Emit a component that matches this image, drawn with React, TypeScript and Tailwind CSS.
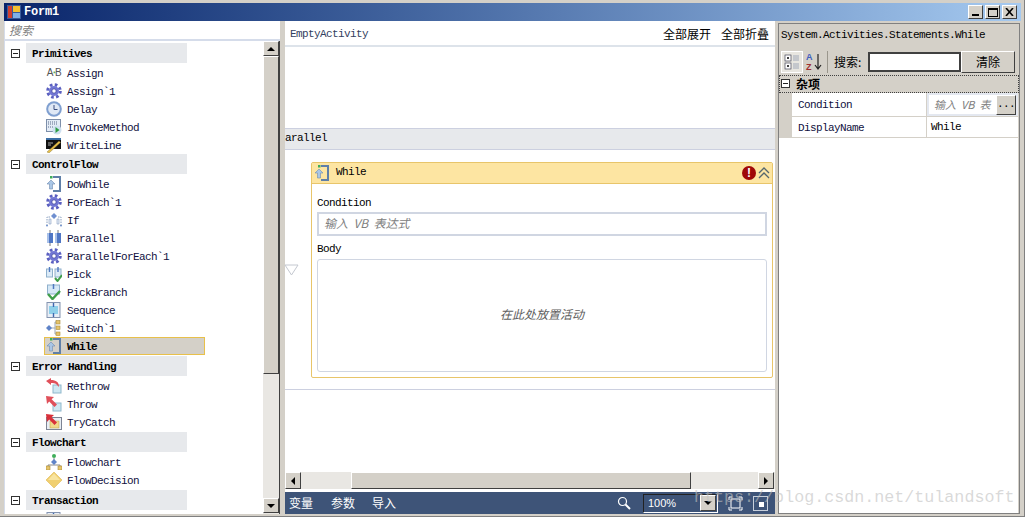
import React from "react";

const Svg = ({ children, s = 16 }: { children: React.ReactNode; s?: number }) => (
  <svg width={s} height={s} viewBox="0 0 16 16" className="shrink-0">{children}</svg>
);

const Gear = () => (
  <Svg>
    <circle cx="8" cy="8" r="6.3" fill="none" stroke="#5a5fc0" strokeWidth="3" strokeDasharray="2.6 2.35" />
    <circle cx="8" cy="8" r="5" fill="#7277d4" />
    <circle cx="8" cy="8" r="2.2" fill="#fff" stroke="#3f44a0" strokeWidth="0.8" />
  </Svg>
);
const AB = () => (
  <span className="w-[16px] h-[16px] flex items-center justify-center text-[10px] leading-none text-[#555] font-['Liberation_Sans',sans-serif]">
    A<span className="text-[#3f9e4a] text-[7px]">*</span>B
  </span>
);
const Clock = () => (
  <Svg>
    <circle cx="8" cy="8" r="7.8" fill="#7f9fd0" />
    <circle cx="8" cy="8" r="5.8" fill="#dfe8f5" />
    <path d="M8 4v4.5h3.5" stroke="#3a4f80" strokeWidth="1" fill="none" />
  </Svg>
);
const Invoke = () => (
  <Svg>
    <rect x="0.5" y="0.5" width="14" height="12" fill="#e4ecf6" stroke="#7d8faa" />
    <path d="M2 3h10M2 5h10M2 8h6" stroke="#5a6a8a" strokeWidth="1" strokeDasharray="1 1" />
    <circle cx="11" cy="11" r="4.5" fill="#cfe0f0" />
    <path d="M9.5 8l4 3-4 3z" fill="#2f9e44" />
  </Svg>
);
const WriteL = () => (
  <Svg>
    <rect x="0" y="1" width="15" height="11" fill="#111" />
    <rect x="0" y="1" width="15" height="2" fill="#3a6ea5" />
    <path d="M2 6h5M2 8h3" stroke="#aaa" strokeWidth="1" />
    <path d="M1 15L13 4l1.5 1.5L3 16z" fill="#e8c04a" stroke="#7a6a30" strokeWidth="0.4" />
  </Svg>
);
const Loop = () => (
  <Svg>
    <path d="M7 1h7v14H7" fill="none" stroke="#5f7fa8" strokeWidth="2" />
    <path d="M5 4l4 4H6.5v5h-3V8H1z" fill="#a9c6e6" stroke="#6f8cb0" strokeWidth="0.6" />
    <rect x="4" y="0" width="2.5" height="2.5" fill="#3fae5a" />
  </Svg>
);
const If = () => (
  <Svg>
    <path d="M8 1l3 3-3 3-3-3z" fill="#6f8fd0" />
    <path d="M4 5H1v8M12 5h3v8" fill="none" stroke="#8aa0c0" strokeWidth="1" strokeDasharray="1.5 1" />
    <path d="M3 7h2v5H3zM11 7h2v5h-2z" fill="#e6eef8" stroke="#8aa0c0" strokeWidth="0.6" />
    <path d="M1 15l-1-2h2zM15 15l-1-2h2z" fill="#4f78c0" />
  </Svg>
);
const Par = () => (
  <Svg>
    <path d="M4 0v16M12 0v16" stroke="#777" strokeWidth="1" />
    <rect x="1" y="3" width="6" height="10" fill="#4f76c4" />
    <rect x="9" y="3" width="6" height="10" fill="#4f76c4" />
    <rect x="1" y="3" width="2" height="10" fill="#a8c0e8" />
    <rect x="9" y="3" width="2" height="10" fill="#a8c0e8" />
  </Svg>
);
const Pick = () => (
  <Svg>
    <rect x="0.5" y="3" width="6" height="8" fill="#dcebf7" stroke="#8fb0cc" />
    <rect x="9" y="3" width="6" height="8" fill="#dcebf7" stroke="#8fb0cc" />
    <path d="M3.5 1v5M12 1v5" stroke="#4f78c0" strokeWidth="1.4" />
    <path d="M9 12l2.5 3L16 9" stroke="#3f9e4a" strokeWidth="2" fill="none" />
  </Svg>
);
const Branch = () => (
  <Svg>
    <rect x="1.5" y="1" width="12" height="9" fill="#d6e8f6" stroke="#8fb0cc" />
    <path d="M7.5 0v5" stroke="#4f78c0" strokeWidth="1.5" />
    <path d="M2 10l4.5 5L14 7" stroke="#3f9e4a" strokeWidth="2.4" fill="none" />
  </Svg>
);
const Seq = () => (
  <Svg>
    <rect x="1" y="0.5" width="13" height="15" fill="#e8eef6" stroke="#8494b0" />
    <rect x="3" y="4" width="9" height="8" fill="#8fd0ea" />
    <path d="M7.5 1v4M7.5 11v4" stroke="#3f68b0" strokeWidth="1.4" />
  </Svg>
);
const Switch = () => (
  <Svg>
    <path d="M3 8h6M10 2h-1v12h1" stroke="#9aa8bc" fill="none" />
    <path d="M3 5l3 3-3 3-3-3z" fill="#5f83c8" />
    <rect x="10" y="0.5" width="4" height="3.5" fill="#e6c46a" stroke="#a98a38" strokeWidth="0.6" />
    <rect x="10" y="6" width="4" height="3.5" fill="#e6c46a" stroke="#a98a38" strokeWidth="0.6" />
    <rect x="10" y="12" width="4" height="3.5" fill="#e6c46a" stroke="#a98a38" strokeWidth="0.6" />
  </Svg>
);
const Rethrow = () => (
  <Svg>
    <rect x="7" y="7" width="8" height="8" fill="#cfe8f2" stroke="#8fb8cc" />
    <path d="M0 3l5-3v2c5 0 8 2 8 7l-3-3c-1-1-3-1-5-1v2z" fill="#e0505a" />
  </Svg>
);
const Thrw = () => (
  <Svg>
    <rect x="7" y="7" width="8" height="8" fill="#cfe8f2" stroke="#8fb8cc" />
    <path d="M0 0l8 1-2.4 2.2L11 8.5 8.5 11 3.2 5.6 1 8z" fill="#e0505a" />
  </Svg>
);
const TryC = () => (
  <Svg>
    <rect x="0.5" y="3.5" width="15" height="12" fill="#e8eef4" stroke="#7d8494" />
    <rect x="4" y="7" width="9" height="7" fill="#f0d88a" stroke="#c0a040" strokeWidth="0.5" />
    <path d="M0 0l8 1-2.4 2.2L11 8.5 8.5 11 3.2 5.6 1 8z" fill="#d8303a" />
  </Svg>
);
const Flow = () => (
  <Svg>
    <circle cx="8" cy="2" r="2" fill="#3fae5a" />
    <path d="M8 4v4M2 13v-2h12v2" stroke="#8a8a8a" fill="none" />
    <path d="M8 5l3 3-3 3-3-3z" fill="#5f83c8" />
    <rect x="0" y="12" width="4" height="4" fill="#e6c46a" stroke="#a98a38" strokeWidth="0.6" />
    <rect x="12" y="12" width="4" height="4" fill="#e6c46a" stroke="#a98a38" strokeWidth="0.6" />
  </Svg>
);
const Decision = () => (
  <Svg>
    <path d="M8 0l8 8-8 8-8-8z" fill="#f0cf70" stroke="#e0b850" strokeWidth="0.6" />
    <path d="M8 1.5L14 8H2z" fill="#f8e4a0" />
  </Svg>
);

const Minus = ({ cls = "" }: { cls?: string }) => (
  <span className={"w-[9px] h-[9px] border border-[#333] bg-white flex items-center justify-center shrink-0 " + cls}>
    <span className="w-[5px] h-px bg-[#222]" />
  </span>
);

type Item = { n: string; i: React.ReactNode; sel?: boolean };
const sections: { t: string; cls: string; items: Item[] }[] = [
  { t: "Primitives", cls: "", items: [
    { n: "Assign", i: <AB /> }, { n: "Assign`1", i: <Gear /> }, { n: "Delay", i: <Clock /> },
    { n: "InvokeMethod", i: <Invoke /> }, { n: "WriteLine", i: <WriteL /> } ] },
  { t: "ControlFlow", cls: "pb-px", items: [
    { n: "DoWhile", i: <Loop /> }, { n: "ForEach`1", i: <Gear /> }, { n: "If", i: <If /> },
    { n: "Parallel", i: <Par /> }, { n: "ParallelForEach`1", i: <Gear /> }, { n: "Pick", i: <Pick /> },
    { n: "PickBranch", i: <Branch /> }, { n: "Sequence", i: <Seq /> }, { n: "Switch`1", i: <Switch /> },
    { n: "While", i: <Loop />, sel: true } ] },
  { t: "Error Handling", cls: "pb-px", items: [
    { n: "Rethrow", i: <Rethrow /> }, { n: "Throw", i: <Thrw /> }, { n: "TryCatch", i: <TryC /> } ] },
  { t: "Flowchart", cls: "pb-px", items: [
    { n: "Flowchart", i: <Flow /> }, { n: "FlowDecision", i: <Decision /> } ] },
  { t: "Transaction", cls: "", items: [{ n: "", i: <Seq /> }] },
];

const mono = "font-['Liberation_Mono','Noto_Sans_CJK_SC',monospace] text-[11px] tracking-[-0.6px]";
const cjk = "font-['Noto_Sans_CJK_SC',sans-serif]";
const bevel = "bg-[#d4d0c8] border border-t-white border-l-white border-r-[#404040] border-b-[#404040]";

const Arrow = ({ d }: { d: "u" | "d" | "l" | "r" }) => {
  const p = { u: "M4 6L0 6 4 2 8 6z", d: "M0 2h8L4 6z", l: "M6 0v8L2 4z", r: "M2 0v8l4-4z" }[d];
  return <svg width="8" height="8" viewBox="0 0 8 8"><path d={p} fill="#000" /></svg>;
};

export default function App() {
  return (
    <div className={"relative w-[1025px] h-[517px] overflow-hidden bg-[#d4d0c8] pt-[3px] pl-[4px] pr-[3px] border-b border-r border-[#808080] " + mono}>
      {/* Title bar */}
      <div className="h-[18px] flex items-center bg-gradient-to-r from-[#0a246a] to-[#a6caf0] pl-[3px] pr-[4px]">
        <svg width="14" height="14" viewBox="0 0 14 14" className="shrink-0">
          <rect width="14" height="14" fill="#3a5a9a" />
          <rect x="1" y="1" width="4" height="12" fill="#d04030" />
          <rect x="6" y="1" width="7" height="6" fill="#f4c030" />
          <rect x="6" y="8" width="7" height="5" fill="#7fb0e8" />
        </svg>
        <span className="ml-[3px] text-white font-bold text-[12px] tracking-[-0.2px]">Form1</span>
        <div className="ml-auto flex items-center gap-[2px]">
          <div className={bevel + " w-[15px] h-[14px] flex items-end justify-center pb-[2px]"}><span className="w-[7px] h-[2px] bg-black" /></div>
          <div className={bevel + " w-[15px] h-[14px] flex items-center justify-center"}><span className="w-[10px] h-[9px] border border-black border-t-2" /></div>
          <div className={bevel + " w-[15px] h-[14px] flex items-center justify-center"}>
            <svg width="9" height="8" viewBox="0 0 9 8"><path d="M1 0l7 8M8 0L1 8" stroke="#000" strokeWidth="1.6" /></svg>
          </div>
        </div>
      </div>

      <div className="flex h-[493px]">
        {/* Left panel */}
        <div className="w-[276px] flex flex-col border-l border-[#d5dcea] bg-white">
          <div className={"h-[18px] flex items-center pl-[4px] italic text-[12px] tracking-normal text-[#808080] " + cjk}>搜索</div>
          <div className="h-[2px] bg-[#d5dcea]" />
          <div className="flex flex-1 min-h-0">
            <div className="w-[259px] pt-[2px] overflow-hidden">
              {sections.map((s) => (
                <div key={s.t} className={s.cls}>
                  <div className="flex items-center h-[20px]">
                    <Minus cls="ml-[6px]" />
                    <div className="ml-[6px] w-[161px] h-full bg-[#e7e9ec] flex items-center pl-[6px] pt-[2px] font-bold">{s.t}</div>
                  </div>
                  <div className="pt-px">
                    {s.items.map((it) => (
                      <div
                        key={s.t + it.n}
                        className={
                          "ml-[39px] w-[161px] h-[18px] flex items-center text-[#101040] " +
                          (it.sel ? "pl-px bg-[#d4d0c8] border border-[#e8c04a] font-bold text-black" : "pl-[2px]")
                        }
                      >
                        {it.i}
                        <span className="ml-[5px] pt-[2px] whitespace-pre">{it.n}</span>
                      </div>
                    ))}
                  </div>
                </div>
              ))}
            </div>
            {/* Vertical scrollbar */}
            <div className="w-[17px] flex flex-col bg-[#e9e7e3] border-r border-[#404040]">
              <div className={bevel + " h-[15px] flex items-center justify-center"}><Arrow d="u" /></div>
              <div className={bevel + " h-[318px]"} />
              <div className="flex-1" />
              <div className={bevel + " h-[15px] mb-px flex items-center justify-center"}><Arrow d="d" /></div>
            </div>
          </div>
        </div>
        <div className="w-[5px]" />

        {/* Center */}
        <div className="w-[490px] flex flex-col bg-white">
          <div className="h-[24px] flex items-center justify-between pl-[5px] pr-[6px] shrink-0 text-[#334060]">
            <span className="pt-[2px]">EmptyActivity</span>
            <span className={"flex gap-[10px] pt-[2px] text-[12px] tracking-normal text-black " + cjk}>
              <span>全部展开</span><span>全部折叠</span>
            </span>
          </div>
          <div className="h-[2px] bg-[#dde3ea] shrink-0" />
          <div className="h-[81px] shrink-0" />
          <div className="h-[22px] shrink-0 bg-[#e7e9ec] border-y border-[#ccd0e0] flex items-center pb-[2px] text-black">arallel</div>
          <div className="relative h-[240px] shrink-0 pt-[12px] pl-[26px] pr-[2px] border-b border-[#ccd0e0]">
            <svg width="16" height="12" viewBox="0 0 16 12" className="absolute left-[-1px] top-[114px]">
              <path d="M1 1h13L7.5 11z" fill="#fff" stroke="#c4c8d0" />
            </svg>
            <div className="h-[216px] border border-[#e8c56a] rounded-[2px] flex flex-col">
              <div className="h-[21px] shrink-0 bg-[#fde5a2] border-b border-[#e8c56a] flex items-center pl-[2px] pr-[2px] text-black">
                <Loop />
                <span className="ml-[6px] pb-[2px]">While</span>
                <span className="ml-auto w-[14px] h-[14px] rounded-full bg-[#a00808] text-white flex items-center justify-center text-[12px] font-bold font-['Liberation_Sans',sans-serif] tracking-normal">!</span>
                <svg width="12" height="12" viewBox="0 0 12 12" className="ml-[2px]">
                  <path d="M1 6l5-5 5 5M1 11l5-5 5 5" fill="none" stroke="#56686e" strokeWidth="1.3" />
                </svg>
              </div>
              <div className="flex flex-col pl-[5px] pr-[5px] text-black">
                <div className="h-[18px] mt-[9px] pt-[2px] flex items-center">Condition</div>
                <div className={"h-[24px] mt-[1px] border-2 border-[#d0d6e2] flex items-center pl-[5px] pb-[2px] italic text-[12px] tracking-normal whitespace-pre text-[#808080] " + cjk}>输入  VB  表达式</div>
                <div className="h-[16px] mt-[4px] pt-[2px] flex items-center">Body</div>
                <div className="h-[113px] mt-[3px] border border-[#d0d6e2] rounded-[3px] flex items-center justify-center pb-[3px]">
                  <span className={"italic text-[12px] tracking-normal text-[#606060] " + cjk}>在此处放置活动</span>
                </div>
              </div>
            </div>
          </div>
          <div className="flex-1" />
          {/* Horizontal scrollbar */}
          <div className="h-[17px] shrink-0 flex bg-[#e9e7e3] pr-px">
            <div className={bevel + " w-[16px] flex items-center justify-center"}><Arrow d="l" /></div>
            <div className="w-[50px]" />
            <div className={bevel + " w-[340px]"} />
            <div className="flex-1" />
            <div className={bevel + " w-[16px] flex items-center justify-center"}><Arrow d="r" /></div>
          </div>
          <div className="h-[3px] shrink-0" />
          {/* Footer */}
          <div className={"h-[22px] shrink-0 bg-[#3e5478] flex items-center pl-[4px] pr-[7px] text-[12px] tracking-normal text-white " + cjk}>
            <span>变量</span>
            <span className="ml-[18px]">参数</span>
            <span className="ml-[17px]">导入</span>
            <svg width="14" height="14" viewBox="0 0 14 14" className="ml-auto">
              <circle cx="5.5" cy="5.5" r="4" fill="none" stroke="#fff" strokeWidth="1.2" />
              <path d="M8.5 8.5L13 13" stroke="#fff" strokeWidth="2" />
            </svg>
            <div className="ml-[12px] w-[75px] h-[19px] border border-t-[#222] border-l-[#222] border-r-white border-b-white flex items-center justify-between">
              <span className="pl-[4px] text-[11px] font-['Liberation_Sans',sans-serif]">100%</span>
              <div className={bevel + " w-[16px] h-[16px] mr-px flex items-center justify-center"}><Arrow d="d" /></div>
            </div>
            <svg width="15" height="15" viewBox="0 0 15 15" className="ml-[10px]">
              <path d="M1 4V1h3M11 1h3v3M14 11v3h-3M4 14H1v-3" fill="none" stroke="#fff" />
              <rect x="3" y="3" width="9" height="9" fill="none" stroke="#fff" />
            </svg>
            <svg width="15" height="15" viewBox="0 0 15 15" className="ml-[10px]">
              <rect x="0.5" y="0.5" width="14" height="14" fill="none" stroke="#c8d0dc" />
              <rect x="6" y="6" width="5" height="5" fill="#fff" />
            </svg>
          </div>
        </div>
        <div className="w-[3px]" />

        {/* Right panel */}
        <div className="w-[242px] mt-[2px] flex flex-col border border-[#808080] text-black">
          <div className="h-[22px] mt-[1px] flex items-center pl-[2px] pb-[2px] shrink-0">System.Activities.Statements.While</div>
          <div className="h-[24px] mt-[3px] flex items-center pl-[2px] shrink-0">
            <div className="w-[22px] h-[22px] bg-[#e8e6e0] border border-white flex items-center justify-center">
              <svg width="16" height="16" viewBox="0 0 16 16">
                <rect x="1" y="1" width="6" height="6" fill="#fff" stroke="#445" strokeWidth="0.7" />
                <rect x="1" y="9" width="6" height="6" fill="#fff" stroke="#445" strokeWidth="0.7" />
                <path d="M3 4h2M3 12h2M4 3v2M4 11v2" stroke="#000" />
                <path d="M9 2h6M9 4h6M9 6h6M9 10h6M9 12h6M9 14h6" stroke="#a0a8b8" />
              </svg>
            </div>
            <div className="w-[18px] ml-[3px] flex items-center">
              <span className="flex flex-col text-[9px] leading-[10px] font-bold font-['Liberation_Sans',sans-serif] tracking-normal">
                <span className="text-[#4060c0]">A</span><span className="text-[#a03030]">Z</span>
              </span>
              <svg width="8" height="18" viewBox="0 0 8 18" className="ml-[1px]"><path d="M4 1v15M1 12l3 4 3-4" fill="none" stroke="#222" strokeWidth="1.2" /></svg>
            </div>
            <span className="ml-[3px] w-px h-[22px] bg-[#9a968c]" />
            <span className={"ml-[6px] w-[34px] text-[12px] tracking-normal " + cjk}>搜索:</span>
            <div className="w-[93px] h-[20px] bg-white border-2 border-[#404040]" />
            <div className={bevel + " w-[54px] h-[22px] flex items-center justify-center text-[12px] tracking-normal " + cjk}>清除</div>
          </div>
          <div className="h-[18px] mt-[1px] border border-dotted border-[#404040] flex items-center pl-px pb-px shrink-0">
            <Minus />
            <span className={"ml-[6px] text-[12px] font-bold tracking-normal " + cjk}>杂项</span>
          </div>
          <div className="flex-1 bg-white flex flex-col mr-px">
            <div className="flex h-[24px] border-b border-[#d4d0c8]">
              <div className="w-[13px] bg-[#d4d0c8]" />
              <div className="w-[135px] pl-[6px] pt-[2px] flex items-center border-r border-[#d4d0c8] text-[#101040]">Condition</div>
              <div className="flex-1 flex items-center border-2 border-[#e4e8f0]">
                <span className={"pl-[5px] italic tracking-normal text-[#808080] flex-1 overflow-hidden whitespace-pre " + cjk}>输入  VB  表</span>
                <span className={bevel + " w-[20px] h-[20px] shrink-0 text-center"}>...</span>
              </div>
            </div>
            <div className="flex h-[21px] border-b border-[#d4d0c8]">
              <div className="w-[13px] bg-[#d4d0c8]" />
              <div className="w-[135px] pl-[6px] pt-[2px] flex items-center border-r border-[#d4d0c8] text-[#101040]">DisplayName</div>
              <div className="flex-1 pl-[4px] flex items-center">While</div>
            </div>
          </div>
        </div>
      </div>

      {/* Watermark over the footer */}
      <span className="absolute left-[694px] top-[488px] text-[16.7px] tracking-normal leading-[20px] text-[#c0c0c0]/60 font-['Liberation_Mono',monospace] whitespace-nowrap">
        https://blog.csdn.net/tulandsoft
      </span>
    </div>
  );
}
